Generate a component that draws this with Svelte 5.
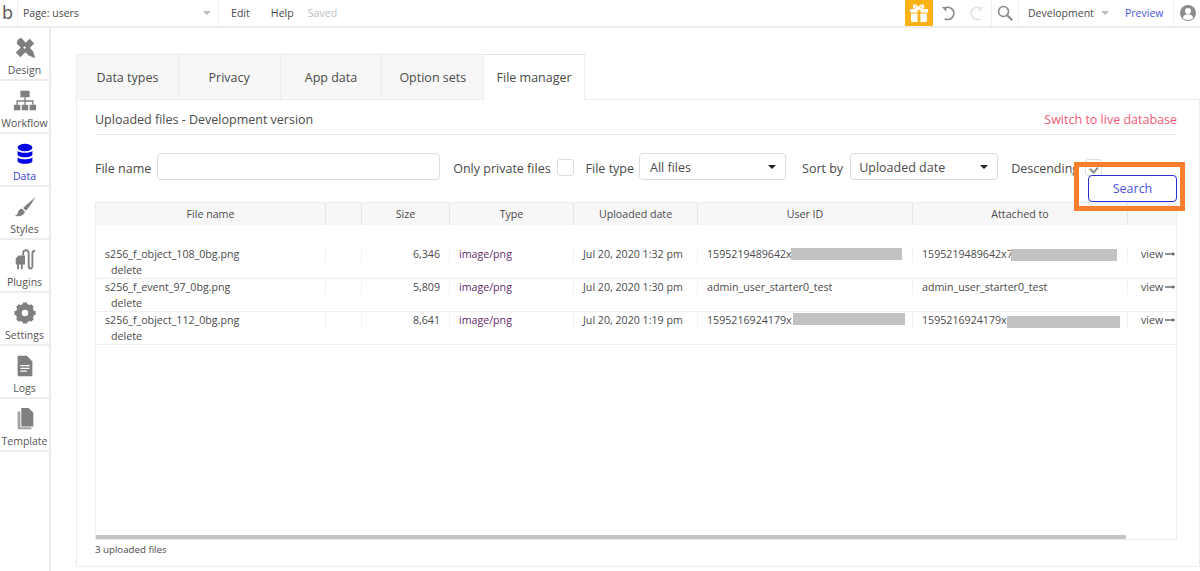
<script>
  const nav = [
    { label: 'Design', icon: 'design' },
    { label: 'Workflow', icon: 'workflow' },
    { label: 'Data', icon: 'data', active: true },
    { label: 'Styles', icon: 'styles' },
    { label: 'Plugins', icon: 'plugins' },
    { label: 'Settings', icon: 'settings' },
    { label: 'Logs', icon: 'logs' },
    { label: 'Template', icon: 'template' }
  ];
  const tabs = ['Data types', 'Privacy', 'App data', 'Option sets', 'File manager'];
  const heads = ['File name', '', 'Size', 'Type', 'Uploaded date', 'User ID', 'Attached to', ''];
  const rows = [
    { name: 's256_f_object_108_0bg.png', size: '6,346', date: 'Jul 20, 2020 1:32 pm', user: '1595219489642x', att: '1595219489642x7', ul: 93, uw: 111, ut: 2, al: 98, aw: 106, at: 3 },
    { name: 's256_f_event_97_0bg.png', size: '5,809', date: 'Jul 20, 2020 1:30 pm', user: 'admin_user_starter0_test', att: 'admin_user_starter0_test' },
    { name: 's256_f_object_112_0bg.png', size: '8,641', date: 'Jul 20, 2020 1:19 pm', user: '1595216924179x', att: '1595216924179x', ul: 95, uw: 112, ut: 1, al: 94, aw: 113, at: 4 }
  ];
</script>

<div class="page">
  <header class="top">
    <div class="logo">b</div>
    <div class="pagesel"><span>Page: users</span><i class="caret"></i></div>
    <div class="menu"><span class="edit">Edit</span><span class="help">Help</span><span class="saved">Saved</span></div>
    <div class="right">
      <div class="gift">
        <svg width="20" height="18" viewBox="0 0 20 18"><path fill="#fff" d="M1 5h7.600v3.400H1zM11.400 5H19v3.400h-7.600zM2 9.400h6.600V18H3.400A1.400 1.400 0 0 1 2 16.600zM11.400 9.400H18v7.200a1.400 1.400 0 0 1-1.400 1.400h-5.200z"/><path fill="none" stroke="#fff" stroke-width="1.800" d="M9.500 4.600C7 4.600 4.600 3.800 4.600 2.400 4.600.6 8 .6 9.500 4.600c1.500-4 5-4 5-2.200 0 1.400-2.500 2.200-5 2.200z"/></svg>
      </div>
      <div class="hist">
        <svg width="15" height="15" viewBox="0 0 16 16"><path fill="none" stroke="#8a8a8a" stroke-width="1.800" d="M3.500 2.500A6.500 6.500 0 1 1 4 13.500"/><path fill="#8a8a8a" d="M.8 1h5v5z"/></svg>
        <svg width="15" height="15" viewBox="0 0 16 16"><path fill="none" stroke="#e2e2e2" stroke-width="1.800" d="M12.500 2.500A6.500 6.500 0 1 0 12 13.500"/><path fill="#e2e2e2" d="M15.200 1h-5v5z"/></svg>
      </div>
      <div class="mag">
        <svg width="16" height="16" viewBox="0 0 16 16"><circle cx="6.500" cy="6.500" r="5" fill="none" stroke="#8a8a8a" stroke-width="1.600"/><path stroke="#8a8a8a" stroke-width="2.200" d="M10.200 10.200l5 5"/></svg>
      </div>
      <div class="env"><span>Development</span><i class="caret"></i></div>
      <div class="preview">Preview</div>
      <div class="avatar">
        <svg width="16" height="16" viewBox="0 0 16 16"><circle cx="8" cy="8" r="8" fill="#8c8c8c"/><circle cx="8" cy="6" r="3" fill="#fff"/><path fill="#fff" d="M2.800 13c.6-3 2.700-3.800 5.200-3.800s4.600.8 5.200 3.800A7 7 0 0 1 8 15a7 7 0 0 1-5.200-2z"/></svg>
      </div>
    </div>
  </header>

  <div class="body">
    <nav class="side">
      {#each nav as n}
        <div class="item" class:active={n.active}>
          <svg class="ic" width="26" height="26" viewBox="0 0 26 26">
            {#if n.icon === 'design'}
              <path fill="#7f7f7f" d="M5 4l4-2 13 15 2 7-7-3L4 8z"/>
              <path fill="#7f7f7f" d="M3 18L18 3l5 5L8 23z"/>
              <path fill="#fff" d="M11 12.400l1.400-1.400 1.600 1.600-1.400 1.400z"/>
            {:else if n.icon === 'workflow'}
              <path fill="#7f7f7f" d="M8 2h10v7H8zM1 17h7v6H1zM9.500 17h7v6h-7zM18 17h7v6h-7z"/>
              <path fill="none" stroke="#7f7f7f" stroke-width="1.500" d="M4.500 17v-4h17v4M13 9v8"/>
            {:else if n.icon === 'data'}
              <ellipse cx="13" cy="6" rx="8" ry="4" fill="#0000e6"/>
              <path fill="#0000e6" d="M5 9.500c2 3 14 3 16 0V14c-2 3.500-14 3.500-16 0zM5 16.500c2 3 14 3 16 0V21c-2 3.500-14 3.500-16 0z"/>
            {:else if n.icon === 'styles'}
              <path fill="#7f7f7f" d="M24 2c-3 4-9 8-13 12l3 3c4-4 8-10 10-15z"/>
              <path fill="#7f7f7f" d="M10 15c-4 0-4 3-5 5-.5 1.500-1.500 2-3 2.500 4 1.500 9 .5 11-4z"/>
            {:else if n.icon === 'plugins'}
              <path fill="#7f7f7f" d="M3 11l3-3h7v10h-2.500v5H8.500v-5h-2v5H4.500v-5H3z"/>
              <path fill="none" stroke="#7f7f7f" stroke-width="2" d="M11 8V6c0-5 6-5 6 0v14c0 3 3.500 3 4 0V6c0-3 2-3 3-3"/>
            {:else if n.icon === 'settings'}
              <circle cx="13" cy="13" r="7.500" fill="none" stroke="#7f7f7f" stroke-width="5"/>
              <path stroke="#7f7f7f" stroke-width="4.500" d="M13 1.500v23M1.500 13h23M4.900 4.900l16.200 16.200M21.100 4.900L4.900 21.100"/>
              <circle cx="13" cy="13" r="3.500" fill="#fff"/>
            {:else if n.icon === 'logs'}
              <path fill="#7f7f7f" d="M6 2h9l6 6v15a1 1 0 0 1-1 1H6a1 1 0 0 1-1-1V3a1 1 0 0 1 1-1z"/>
              <path fill="#fff" d="M8 12h10v1.200H8zM8 15h10v1.200H8zM8 18h7v1.200H8z"/>
            {:else}
              <path fill="#a2a2a2" d="M5 5h3v17h12v2H6a1 1 0 0 1-1-1z"/>
              <path fill="#7f7f7f" d="M9 1h8l5 5v15H9z"/>
            {/if}
          </svg>
          <span>{n.label}</span>
        </div>
      {/each}
    </nav>

    <main class="main">
      <div class="tabs">
        {#each tabs as t, i}
          <div class="tab" class:on={i === 4}>{t}</div>
        {/each}
      </div>
      <section class="panel">
        <div class="title">
          <span>Uploaded files - Development version</span>
          <span class="live">Switch to live database</span>
        </div>
        <div class="filters">
          <label for="fn">File name</label>
          <input id="fn" class="text" />
          <span class="private">Only private files</span>
          <i class="box"></i>
          <span class="ftype">File type</span>
          <div class="select s1"><span>All files</span><i class="dark"></i></div>
          <span class="sort">Sort by</span>
          <div class="select s2"><span>Uploaded date</span><i class="dark"></i></div>
          <span class="desc">Descending</span>
          <i class="box check">
            <svg class="tick" width="12" height="8" viewBox="0 0 12 10"><path fill="none" stroke="#8e8e8e" stroke-width="2.600" d="M1 3.500l4.500 4.500L11 2"/></svg>
          </i>
          <button class="search">Search</button>
          <div class="callout"></div>
        </div>
        <div class="table">
          <div class="row head">
            {#each heads as h}<div class="cell">{h}</div>{/each}
          </div>
          <div class="rows">
            {#each rows as r}
              <div class="row data">
                <div class="cell name">{r.name}<div class="del">delete</div></div>
                <div class="cell"></div>
                <div class="cell size">{r.size}</div>
                <div class="cell type">image/png</div>
                <div class="cell date">{r.date}</div>
                <div class="cell id">
                  <span>{r.user}</span>
                  {#if r.uw}<b class="mask" style="left:{r.ul}px;width:{r.uw}px;top:{r.ut}px"></b>{/if}
                </div>
                <div class="cell id">
                  <span>{r.att}</span>
                  {#if r.aw}<b class="mask" style="left:{r.al}px;width:{r.aw}px;top:{r.at}px"></b>{/if}
                </div>
                <div class="cell view">
                  <span>view</span>
                  <svg class="arr" width="10" height="6" viewBox="0 0 10 6"><path stroke="#555" stroke-width="1.300" d="M0 3h9"/><path fill="#555" d="M7.500 1l2.500 2-2.500 2z"/></svg>
                </div>
              </div>
            {/each}
          </div>
          <div class="scroll"></div>
        </div>
        <div class="count">3 uploaded files</div>
      </section>
    </main>
  </div>
</div>

<style>
  :global(body) { margin: 0; background: #fff; }
  .page {
    width: 1200px; height: 571px; overflow: hidden; background: #fff; color: #4a4a4a;
    font-family: "Open Sans", "Liberation Sans", sans-serif; font-size: 12px;
  }
  .top { height: 26px; display: flex; align-items: center; border-bottom: 2px solid #ececec; background: #fff; }
  .logo { width: 18px; height: 26px; border-right: 1px solid #efefef; color: #555; font-size: 18px; line-height: 24px; padding-left: 2px; box-sizing: border-box; }
  .pagesel { width: 201px; height: 26px; display: flex; align-items: center; justify-content: space-between; padding: 0 7px 0 5px; box-sizing: border-box; border-right: 1px solid #efefef; font-size: 10.500px; color: #4a4a4a; }
  .caret { width: 0; height: 0; border: 4px solid transparent; border-top: 4px solid #b8bcc4; border-bottom: 0; display: block; }
  .menu { display: flex; font-size: 10.600px; align-items: center; }
  .edit { margin-left: 12px; }
  .help { margin-left: 21px; }
  .saved { margin-left: 14px; color: #bdbdbd; }
  .right { margin-left: auto; display: flex; height: 26px; align-items: center; }
  .gift { width: 28px; height: 26px; background: #fbb215; display: flex; align-items: center; justify-content: center; }
  .hist { width: 59px; height: 26px; display: flex; align-items: center; gap: 13px; padding-left: 8px; box-sizing: border-box; border-right: 1px solid #efefef; }
  .mag { width: 27px; height: 26px; display: flex; align-items: center; justify-content: center; border-right: 1px solid #efefef; box-sizing: border-box; }
  .env { width: 107px; display: flex; align-items: center; font-size: 10.500px; padding-left: 9px; gap: 7px; box-sizing: border-box; color: #4a4a4a; }
  .preview { width: 48px; color: #4a55e0; font-size: 10.500px; margin-left: -1px; }
  .avatar { width: 27px; height: 26px; display: flex; align-items: center; justify-content: center; border-left: 1px solid #efefef; box-sizing: border-box; padding-left: 2px; }

  .body { display: flex; height: 543px; }
  .side { width: 51px; flex: none; box-sizing: border-box; border-right: 2px solid #ececec; height: 100%; }
  .item { border-bottom: 2px solid #ececec; display: flex; flex-direction: column; align-items: center; padding-top: 8px; height: 43px; font-size: 10.500px; line-height: 14px; color: #555; white-space: nowrap; }
  .item .ic { height: 24px; width: 24px; margin-bottom: 3px; flex: none; }
  .item.active span { color: #3a3ae0; }

  .main { flex: 1; padding: 26px 0 0 25px; min-width: 0; }
  .tabs { display: flex; height: 45px; width: 509px; position: relative; z-index: 1; }
  .tab { width: 102px; height: 45px; box-sizing: border-box; background: #f7f7f7; border: 1px solid #ececec; border-left: 0; border-bottom: 0; display: flex; align-items: center; justify-content: center; font-size: 12.500px; color: #4a4a4a; }
  .tab:first-child { border-left: 1px solid #ececec; width: 103px; }
  .tab.on { background: #fff; width: 101px; height: 46px; border-top: 1px solid #e4e4e4; }
  .panel { height: 468px; box-sizing: border-box; border: 1px solid #ececec; padding: 0 22px 0 18px; position: relative; }
  .title { height: 35px; box-sizing: border-box; padding-top: 4px; display: flex; justify-content: space-between; align-items: center; font-size: 12.500px; border-bottom: 1px solid #e8e8e8; }
  .live { color: #f45b75; }
  .filters { height: 67px; box-sizing: border-box; padding-top: 18px; display: flex; align-items: flex-start; position: relative; font-size: 12.500px; }
  .filters > span, .filters > label { line-height: 31px; }
  .text { width: 283px; height: 27px; box-sizing: border-box; margin: 0 0 0 6px; border: 1px solid #dcdcdc; border-radius: 4px; background: #fff; }
  .private { margin-left: 13px; }
  .box { width: 15px; height: 15px; margin: 6px 0 0 6px; border: 1px solid #dcdcdc; border-radius: 3px; display: flex; align-items: center; justify-content: center; }
  .ftype { margin-left: 12px; }
  .select { height: 27px; box-sizing: border-box; border: 1px solid #dcdcdc; border-radius: 4px; display: flex; align-items: center; justify-content: space-between; padding: 1px 9px 0 10px; }
  .s1 { width: 147px; margin-left: 5px; }
  .s2 { width: 148px; margin-left: 7px; padding-left: 8px; }
  .dark { width: 0; height: 0; border: 4px solid transparent; border-top: 4px solid #222; border-bottom: 0; display: block; }
  .sort { margin-left: 16px; }
  .desc { margin-left: 13px; }
  .check { margin: 6px 0 0 6px; flex: none; }
  .tick { position: relative; top: 2px; z-index: 4; }
  .search { position: absolute; right: 0; top: 40px; width: 89px; height: 27px; box-sizing: border-box; border: 1px solid #2f2fd8; border-radius: 4px; background: #fff; color: #4a55e0; font: inherit; padding: 0; z-index: 3; }
  .callout { position: absolute; right: -8px; top: 27px; width: 111px; height: 49px; box-sizing: border-box; border: 5px solid #f97f2c; z-index: 2; }

  .table { height: 338px; box-sizing: border-box; border: 1px solid #ececec; position: relative; font-size: 10.650px; }
  .row { display: grid; grid-template-columns: 230px 36px 88px 124px 124px 215px 215px 1fr; }
  .head { height: 22px; background: #f7f7f7; text-align: center; line-height: 22px; color: #4a4a4a; }
  .head .cell { border-right: 1px solid #e4e4e4; box-sizing: border-box; }
  .head .cell:last-child { border-right: 0; }
  .rows { padding-top: 21px; }
  .data { height: 33px; box-sizing: border-box; border-bottom: 1px solid #efefef; }
  .data .cell { height: 16px; line-height: 16px; border-right: 1px solid #f2f2f2; box-sizing: border-box; position: relative; white-space: nowrap; }
  .data .cell:last-child { border-right: 0; }
  .name { padding-left: 9px; }
  .del { padding-left: 6px; }
  .size { text-align: right; padding-right: 9px; }
  .type { padding-left: 9px; color: #5f2a6b; }
  .date { padding-left: 9px; }
  .id { padding-left: 9px; }
  .mask { position: absolute; height: 12px; background: #c2c2c2; }
  .view { padding-left: 13px; display: flex; align-items: center; gap: 2px; }
  .arr { flex: none; }
  .scroll { position: absolute; left: 0; bottom: 0; width: 1030px; height: 4px; background: #c4c4c4; }
  .count { font-size: 9.700px; margin-top: 3px; line-height: 14px; }
</style>
